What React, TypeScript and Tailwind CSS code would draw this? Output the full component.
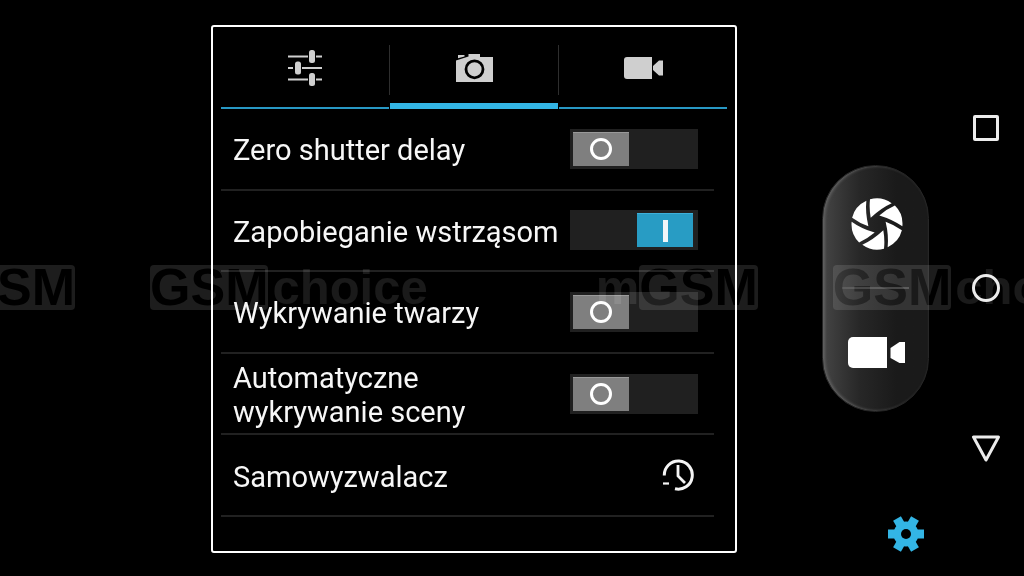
import { Fragment, useState, type ReactNode } from "react";

function SlidersIcon() {
  return (
    <svg width="36" height="36" viewBox="0 0 36 36" fill="#cfcfcf" aria-hidden="true">
      <path d="M1 5.500h20v2H1zM29 5.500h6v2h-6zM1 17h5v2H1zM15 17h20v2H15zM1 28.500h20v2H1zM29 28.500h6v2h-6z" />
      <rect x="22" y="0" width="6" height="13" rx="2.500" />
      <rect x="8" y="11.500" width="6" height="13" rx="2.500" />
      <rect x="22" y="23" width="6" height="13" rx="2.500" />
    </svg>
  );
}

function CameraIcon() {
  return (
    <svg width="37" height="28" viewBox="0 0 37 28" aria-hidden="true">
      <path d="M0 6.500 12.500 2.500V0H24v3h13v25H0z" fill="#cfcfcf" />
      <path d="M2 1h6.500v1.500L2 4.300z" fill="#cfcfcf" />
      <circle cx="18.500" cy="15.300" r="8.500" fill="none" stroke="#000" strokeWidth="2.800" />
    </svg>
  );
}

function VideoTabIcon() {
  return (
    <svg width="39" height="22" viewBox="0 0 39 22" fill="#cfcfcf" aria-hidden="true">
      <path d="M3 0h25v22H3a3 3 0 0 1-3-3V3a3 3 0 0 1 3-3z" />
      <path d="M29 9l6-5.500h4v15h-4L29 13z" />
    </svg>
  );
}

function RecordIcon() {
  return (
    <svg width="57" height="31" viewBox="0 0 57 31" fill="#fff" aria-hidden="true">
      <path d="M5 0h34v31H5a5 5 0 0 1-5-5V5a5 5 0 0 1 5-5z" />
      <path d="M42.500 11l9-6H57v21h-5.500l-9-5z" />
    </svg>
  );
}

function ShutterIcon() {
  const blades = [0, 60, 120, 180, 240, 300];
  return (
    <svg width="52" height="52" viewBox="-26 -26 52 52" fill="#fff" aria-hidden="true">
      {blades.map((angle) => (
        <path
          key={angle}
          transform={`rotate(${angle})`}
          d="M-7 -24.700Q4.500 -28 14.700 -20.800Q4 -16 -6.300 -6.300Q-8 -15.500 -7 -24.700z"
        />
      ))}
    </svg>
  );
}

function TimerIcon() {
  return (
    <svg width="32" height="32" viewBox="0 0 32 32" fill="none" stroke="#f4f4f4" aria-hidden="true">
      <path d="M2.300 16.500A14 14 0 1 1 13 29.700" strokeWidth="3" />
      <path d="M16 6v11l7 7" strokeWidth="2.800" />
      <path d="M1 24.500h6" strokeWidth="2.200" />
    </svg>
  );
}

function GearIcon() {
  return (
    <svg width="36" height="36" viewBox="-18 -18 36 36" aria-hidden="true">
      <g fill="#33b5e5">
        <circle r="12.500" />
        <rect x="-18" y="-4.500" width="36" height="9" />
        <rect x="-18" y="-4.500" width="36" height="9" transform="rotate(60)" />
        <rect x="-18" y="-4.500" width="36" height="9" transform="rotate(120)" />
      </g>
      <circle r="5" fill="#000" />
    </svg>
  );
}

interface RowProps {
  label: string;
  children: ReactNode;
}

const rowStyle =
  "flex items-center justify-between border-b-2 border-[#212121] pl-3 pr-4 text-[29px] leading-[34px]";

function ToggleRow({ label, defaultOn = false }: { label: string; defaultOn?: boolean }) {
  const [on, setOn] = useState(defaultOn);
  return (
    <label className={rowStyle}>
      <span className="flex-1 pt-[3px]">{label}</span>
      <span className="grid h-10 w-32 shrink-0 bg-[#202020]">
        <input
          type="checkbox"
          role="switch"
          checked={on}
          onChange={(e) => setOn(e.target.checked)}
          className="col-start-1 row-start-1 appearance-none"
        />
        <span
          className={
            on
              ? "pointer-events-none col-start-1 row-start-1 mr-[5px] mt-[3px] flex h-[34px] w-14 items-center justify-center justify-self-end border-t border-[#3eb0da] bg-[#289cc4]"
              : "pointer-events-none col-start-1 row-start-1 ml-[3px] mt-[3px] flex h-[34px] w-14 items-center justify-center border-t border-[#999] bg-[#7f7f7f]"
          }
        >
          {on ? (
            <span className="h-[22px] w-[5px] bg-[#f0f6f8]" />
          ) : (
            <span className="size-[22px] rounded-full border-[3px] border-white" />
          )}
        </span>
      </span>
    </label>
  );
}

function ActionRow({ label, children }: RowProps) {
  return (
    <button type="button" className={`${rowStyle} text-left`}>
      <span className="pt-[3px]">{label}</span>
      <span className="mr-1">{children}</span>
    </button>
  );
}

const tabs = [
  { name: "Ogólne", icon: <SlidersIcon /> },
  { name: "Aparat", icon: <CameraIcon /> },
  { name: "Wideo", icon: <VideoTabIcon /> },
];

function SettingsPanel() {
  const [active, setActive] = useState(1);
  return (
    <section className="mb-[23px] mt-[25px] flex min-w-0 flex-1 flex-col rounded-[3px] border-2 border-white px-2 pb-[34px]">
      <div role="tablist" className="flex h-[82px] shrink-0">
        {tabs.map((tab, i) => (
          <Fragment key={tab.name}>
            {i > 0 && <span className="mt-[18px] h-[50px] w-px bg-[#2e2e2e]" />}
            <button
              type="button"
              role="tab"
              aria-label={tab.name}
              aria-selected={active === i}
              onClick={() => setActive(i)}
              className={
                active === i
                  ? "flex flex-1 items-center justify-center border-b-[6px] border-[#33b5e5] pt-[6px]"
                  : "flex flex-1 items-center justify-center border-b-2 border-[#2898c4] pt-[2px]"
              }
            >
              {tab.icon}
            </button>
          </Fragment>
        ))}
      </div>

      <div className="mr-[13px] grid flex-1 auto-rows-fr">
        <ToggleRow label="Zero shutter delay" />
        <ToggleRow label="Zapobieganie wstrząsom" defaultOn />
        <ToggleRow label="Wykrywanie twarzy" />
        <ToggleRow label="Automatyczne wykrywanie sceny" />
        <ActionRow label="Samowyzwalacz">
          <TimerIcon />
        </ActionRow>
      </div>
    </section>
  );
}

function CameraControls() {
  return (
    <aside className="grid w-[210px] shrink-0 grid-rows-[1fr_auto_1fr] pl-[85px]">
      <div className="row-start-2 grid h-[247px] w-[107px] grid-rows-[1fr_auto_1fr] justify-items-center rounded-full border border-[#262626] bg-linear-to-r from-[#454545] via-[#272727] via-35% to-[#1a1a1a] to-70% shadow-[inset_2px_0_3px_#626262]">
        <button type="button" aria-label="Zrób zdjęcie" className="ml-[2px] mt-8 self-start">
          <ShutterIcon />
        </button>
        <span className="h-[2px] w-[67px] bg-[#484848]" />
        <button type="button" aria-label="Nagraj wideo" className="mb-[43px] ml-[2px] self-end">
          <RecordIcon />
        </button>
      </div>
      <button
        type="button"
        aria-label="Ustawienia"
        className="row-start-3 mb-6 mr-[23px] self-end justify-self-end"
      >
        <GearIcon />
      </button>
    </aside>
  );
}

function NavBar() {
  return (
    <nav className="flex w-[77px] shrink-0 flex-col items-center justify-around py-12">
      <button type="button" aria-label="Ostatnie" className="size-[26px] rounded-[2px] border-[3px] border-[#ececec]" />
      <button type="button" aria-label="Ekran główny" className="size-7 rounded-full border-[3px] border-[#ececec]" />
      <button type="button" aria-label="Wstecz">
        <svg width="30" height="27" viewBox="0 0 30 27" fill="none" aria-hidden="true">
          <path d="M2.500 2h25L15 25z" stroke="#ececec" strokeWidth="3" strokeLinejoin="round" />
        </svg>
      </button>
    </nav>
  );
}

function Mark({ prefix, suffix }: { prefix?: string; suffix?: string }) {
  return (
    <span className="flex shrink-0 items-center">
      {prefix && <span>{prefix}</span>}
      <span className="rounded-[4px] bg-[#1d1d1d] text-[52px] text-black">GSM</span>
      {suffix && <span className="pl-1">{suffix}</span>}
    </span>
  );
}

// Screen blending lets the black letters stay see-through inside their grey plate.
function Watermark() {
  return (
    <div
      aria-hidden="true"
      className="pointer-events-none absolute inset-x-0 top-[265px] flex overflow-hidden font-['Liberation_Sans',sans-serif] text-[49px] font-bold leading-[45px] text-[#1a1a1a] mix-blend-screen"
    >
      <div className="-ml-[87px] flex shrink-0 gap-[75px]">
        <Mark prefix="m" />
        <Mark suffix="choice" />
      </div>
      <div className="ml-[168px] flex shrink-0 gap-[75px]">
        <Mark prefix="m" />
        <Mark suffix="choice" />
      </div>
    </div>
  );
}

export default function App() {
  return (
    <main className="relative flex min-h-screen overflow-hidden bg-black pl-[211px] font-[Roboto,sans-serif] text-[#f7f7f7]">
      <SettingsPanel />
      <CameraControls />
      <NavBar />
      <Watermark />
    </main>
  );
}
